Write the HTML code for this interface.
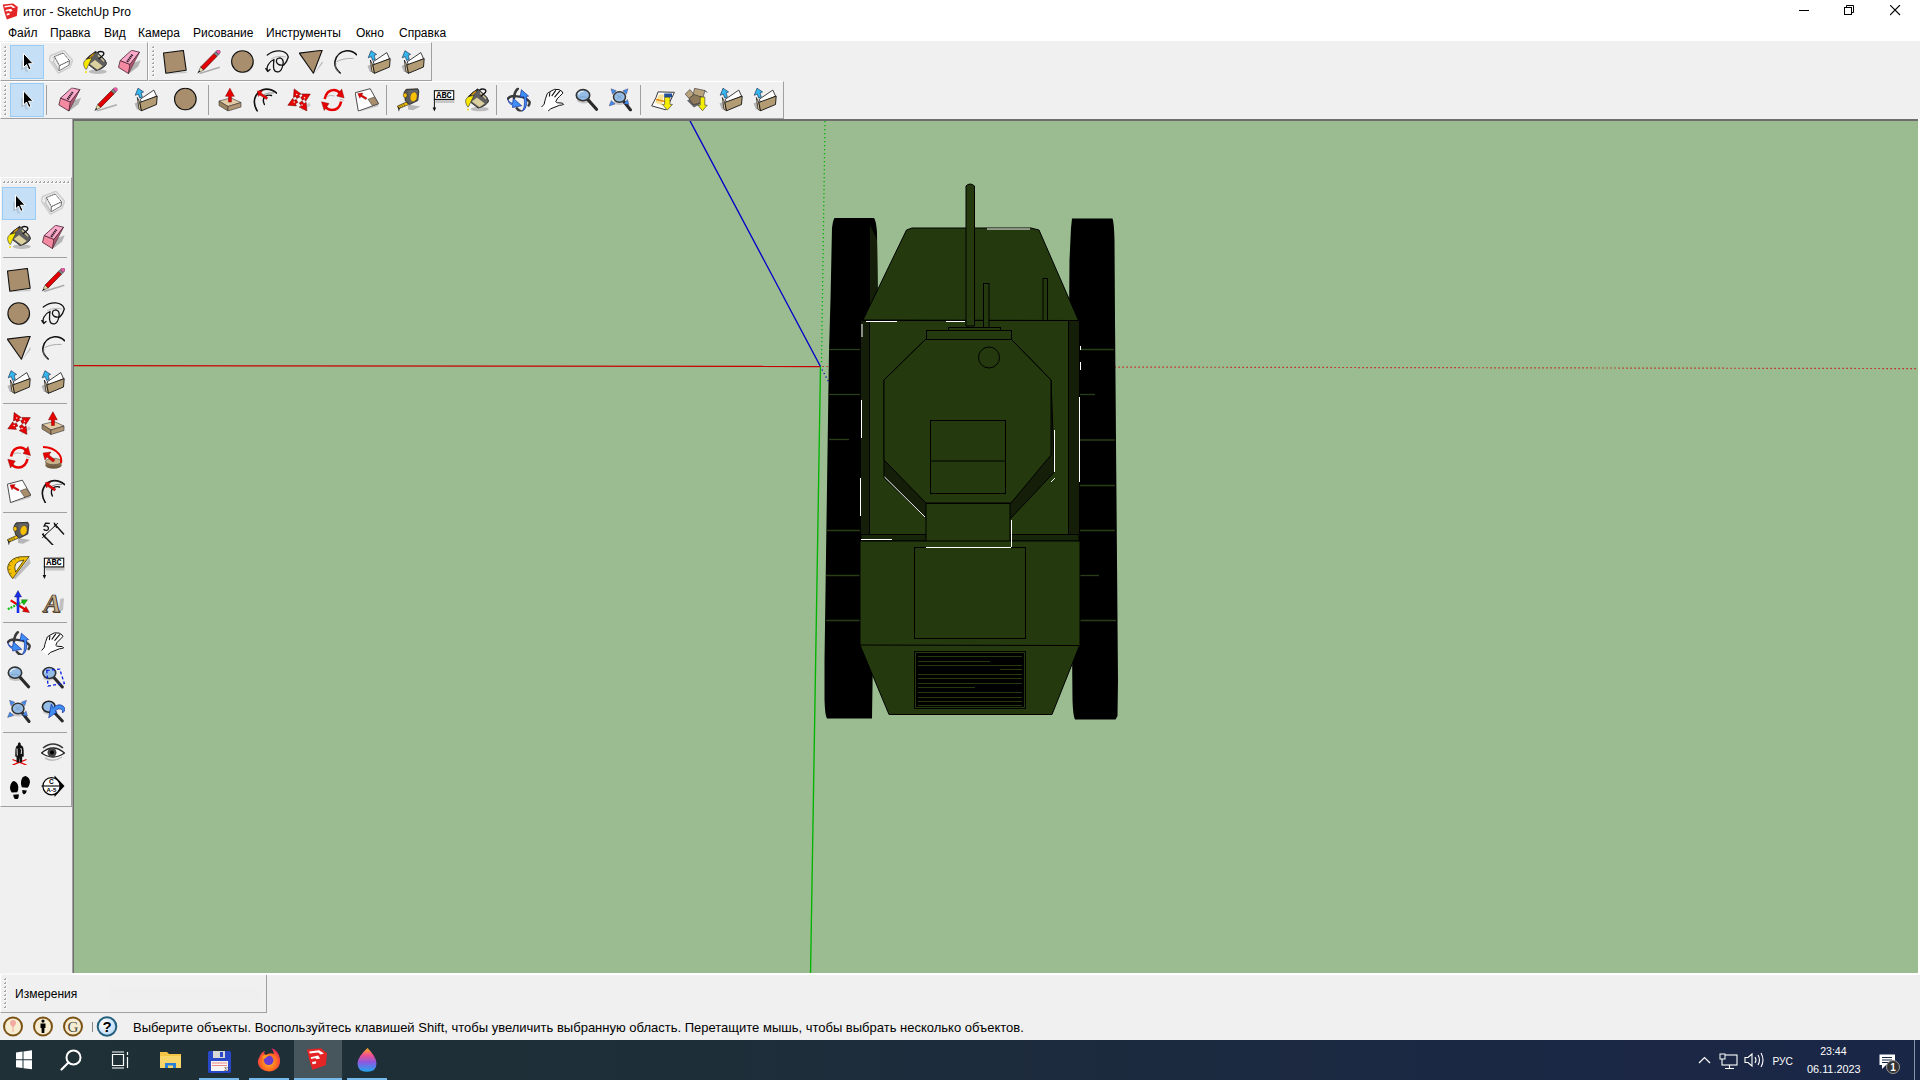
<!DOCTYPE html>
<html><head><meta charset="utf-8">
<style>
*{margin:0;padding:0;box-sizing:border-box}
html,body{width:1920px;height:1080px;overflow:hidden;background:#f0f0f0;font-family:"Liberation Sans",sans-serif;color:#000}
.abs{position:absolute}
.mi{position:absolute;top:25px;font-size:12px;line-height:16px;white-space:nowrap}
.btnsel{position:absolute;background:#c4dff6;border:1px solid #98cbf5}
</style></head>
<body>
<div class="abs" style="left:0;top:0;width:1920px;height:41px;background:#fff"></div>

<svg class="abs" style="left:1.5px;top:2.5px" width="16.5" height="17"><use href="#sulogo" x="0" y="0" width="16.5" height="17"/></svg>
<div class="abs" style="left:1799px;top:10px;width:10px;height:1px;background:#000"></div>
<svg class="abs" style="left:1844px;top:5px" width="12" height="12"><rect x="0.5" y="2.5" width="7" height="7" fill="none" stroke="#000"/><path d="M2.5,2.5 L2.5,0.5 L9.5,0.5 L9.5,7.5 L7.5,7.5" fill="none" stroke="#000"/></svg>
<svg class="abs" style="left:1890px;top:5px" width="11" height="11"><path d="M0,0 L10,10 M10,0 L0,10" stroke="#000" stroke-width="1.1"/></svg>

<div class="abs" style="left:23px;top:4px;font-size:12px;line-height:16px">итог - SketchUp Pro</div>
<div class="mi" style="left:8px">Файл</div>
<div class="mi" style="left:50px">Правка</div>
<div class="mi" style="left:104px">Вид</div>
<div class="mi" style="left:138px">Камера</div>
<div class="mi" style="left:193px">Рисование</div>
<div class="mi" style="left:266px">Инструменты</div>
<div class="mi" style="left:356px">Окно</div>
<div class="mi" style="left:399px">Справка</div>
<div class="abs" style="left:0px;top:42px;width:148px;height:39px;border-top:1px solid #fff;border-left:1px solid #fff;border-right:1px solid #a0a0a0;border-bottom:1px solid #a0a0a0"></div><div class="abs" style="left:148px;top:42px;width:284px;height:39px;border-top:1px solid #fff;border-left:1px solid #fff;border-right:1px solid #a0a0a0;border-bottom:1px solid #a0a0a0"></div><div class="abs" style="left:0px;top:81px;width:784px;height:38px;border-top:1px solid #fff;border-left:1px solid #fff;border-right:1px solid #a0a0a0;border-bottom:1px solid #a0a0a0"></div><div class="abs" style="left:0px;top:177px;width:72px;height:630px;border-top:1px solid #fff;border-left:1px solid #fff;border-right:1px solid #a0a0a0;border-bottom:1px solid #a0a0a0"></div><div class="abs" style="left:4px;top:46px;width:2px;height:2px;background:linear-gradient(135deg,#f0f0f0 0 30%,#a4a4a4 30% 100%);border-right:1px solid #fafafa;border-bottom:1px solid #fafafa;box-sizing:content-box"></div><div class="abs" style="left:4px;top:50px;width:2px;height:2px;background:linear-gradient(135deg,#f0f0f0 0 30%,#a4a4a4 30% 100%);border-right:1px solid #fafafa;border-bottom:1px solid #fafafa;box-sizing:content-box"></div><div class="abs" style="left:4px;top:54px;width:2px;height:2px;background:linear-gradient(135deg,#f0f0f0 0 30%,#a4a4a4 30% 100%);border-right:1px solid #fafafa;border-bottom:1px solid #fafafa;box-sizing:content-box"></div><div class="abs" style="left:4px;top:58px;width:2px;height:2px;background:linear-gradient(135deg,#f0f0f0 0 30%,#a4a4a4 30% 100%);border-right:1px solid #fafafa;border-bottom:1px solid #fafafa;box-sizing:content-box"></div><div class="abs" style="left:4px;top:62px;width:2px;height:2px;background:linear-gradient(135deg,#f0f0f0 0 30%,#a4a4a4 30% 100%);border-right:1px solid #fafafa;border-bottom:1px solid #fafafa;box-sizing:content-box"></div><div class="abs" style="left:4px;top:66px;width:2px;height:2px;background:linear-gradient(135deg,#f0f0f0 0 30%,#a4a4a4 30% 100%);border-right:1px solid #fafafa;border-bottom:1px solid #fafafa;box-sizing:content-box"></div><div class="abs" style="left:4px;top:70px;width:2px;height:2px;background:linear-gradient(135deg,#f0f0f0 0 30%,#a4a4a4 30% 100%);border-right:1px solid #fafafa;border-bottom:1px solid #fafafa;box-sizing:content-box"></div><div class="abs" style="left:4px;top:74px;width:2px;height:2px;background:linear-gradient(135deg,#f0f0f0 0 30%,#a4a4a4 30% 100%);border-right:1px solid #fafafa;border-bottom:1px solid #fafafa;box-sizing:content-box"></div><div class="abs" style="left:152px;top:46px;width:2px;height:2px;background:linear-gradient(135deg,#f0f0f0 0 30%,#a4a4a4 30% 100%);border-right:1px solid #fafafa;border-bottom:1px solid #fafafa;box-sizing:content-box"></div><div class="abs" style="left:152px;top:50px;width:2px;height:2px;background:linear-gradient(135deg,#f0f0f0 0 30%,#a4a4a4 30% 100%);border-right:1px solid #fafafa;border-bottom:1px solid #fafafa;box-sizing:content-box"></div><div class="abs" style="left:152px;top:54px;width:2px;height:2px;background:linear-gradient(135deg,#f0f0f0 0 30%,#a4a4a4 30% 100%);border-right:1px solid #fafafa;border-bottom:1px solid #fafafa;box-sizing:content-box"></div><div class="abs" style="left:152px;top:58px;width:2px;height:2px;background:linear-gradient(135deg,#f0f0f0 0 30%,#a4a4a4 30% 100%);border-right:1px solid #fafafa;border-bottom:1px solid #fafafa;box-sizing:content-box"></div><div class="abs" style="left:152px;top:62px;width:2px;height:2px;background:linear-gradient(135deg,#f0f0f0 0 30%,#a4a4a4 30% 100%);border-right:1px solid #fafafa;border-bottom:1px solid #fafafa;box-sizing:content-box"></div><div class="abs" style="left:152px;top:66px;width:2px;height:2px;background:linear-gradient(135deg,#f0f0f0 0 30%,#a4a4a4 30% 100%);border-right:1px solid #fafafa;border-bottom:1px solid #fafafa;box-sizing:content-box"></div><div class="abs" style="left:152px;top:70px;width:2px;height:2px;background:linear-gradient(135deg,#f0f0f0 0 30%,#a4a4a4 30% 100%);border-right:1px solid #fafafa;border-bottom:1px solid #fafafa;box-sizing:content-box"></div><div class="abs" style="left:152px;top:74px;width:2px;height:2px;background:linear-gradient(135deg,#f0f0f0 0 30%,#a4a4a4 30% 100%);border-right:1px solid #fafafa;border-bottom:1px solid #fafafa;box-sizing:content-box"></div><div class="abs" style="left:4px;top:85px;width:2px;height:2px;background:linear-gradient(135deg,#f0f0f0 0 30%,#a4a4a4 30% 100%);border-right:1px solid #fafafa;border-bottom:1px solid #fafafa;box-sizing:content-box"></div><div class="abs" style="left:4px;top:89px;width:2px;height:2px;background:linear-gradient(135deg,#f0f0f0 0 30%,#a4a4a4 30% 100%);border-right:1px solid #fafafa;border-bottom:1px solid #fafafa;box-sizing:content-box"></div><div class="abs" style="left:4px;top:93px;width:2px;height:2px;background:linear-gradient(135deg,#f0f0f0 0 30%,#a4a4a4 30% 100%);border-right:1px solid #fafafa;border-bottom:1px solid #fafafa;box-sizing:content-box"></div><div class="abs" style="left:4px;top:97px;width:2px;height:2px;background:linear-gradient(135deg,#f0f0f0 0 30%,#a4a4a4 30% 100%);border-right:1px solid #fafafa;border-bottom:1px solid #fafafa;box-sizing:content-box"></div><div class="abs" style="left:4px;top:101px;width:2px;height:2px;background:linear-gradient(135deg,#f0f0f0 0 30%,#a4a4a4 30% 100%);border-right:1px solid #fafafa;border-bottom:1px solid #fafafa;box-sizing:content-box"></div><div class="abs" style="left:4px;top:105px;width:2px;height:2px;background:linear-gradient(135deg,#f0f0f0 0 30%,#a4a4a4 30% 100%);border-right:1px solid #fafafa;border-bottom:1px solid #fafafa;box-sizing:content-box"></div><div class="abs" style="left:4px;top:109px;width:2px;height:2px;background:linear-gradient(135deg,#f0f0f0 0 30%,#a4a4a4 30% 100%);border-right:1px solid #fafafa;border-bottom:1px solid #fafafa;box-sizing:content-box"></div><div class="abs" style="left:4px;top:113px;width:2px;height:2px;background:linear-gradient(135deg,#f0f0f0 0 30%,#a4a4a4 30% 100%);border-right:1px solid #fafafa;border-bottom:1px solid #fafafa;box-sizing:content-box"></div><div class="abs" style="left:3px;top:181px;width:2px;height:2px;background:linear-gradient(135deg,#f0f0f0 0 30%,#a4a4a4 30% 100%);border-right:1px solid #fafafa;border-bottom:1px solid #fafafa;box-sizing:content-box"></div><div class="abs" style="left:7px;top:181px;width:2px;height:2px;background:linear-gradient(135deg,#f0f0f0 0 30%,#a4a4a4 30% 100%);border-right:1px solid #fafafa;border-bottom:1px solid #fafafa;box-sizing:content-box"></div><div class="abs" style="left:11px;top:181px;width:2px;height:2px;background:linear-gradient(135deg,#f0f0f0 0 30%,#a4a4a4 30% 100%);border-right:1px solid #fafafa;border-bottom:1px solid #fafafa;box-sizing:content-box"></div><div class="abs" style="left:15px;top:181px;width:2px;height:2px;background:linear-gradient(135deg,#f0f0f0 0 30%,#a4a4a4 30% 100%);border-right:1px solid #fafafa;border-bottom:1px solid #fafafa;box-sizing:content-box"></div><div class="abs" style="left:19px;top:181px;width:2px;height:2px;background:linear-gradient(135deg,#f0f0f0 0 30%,#a4a4a4 30% 100%);border-right:1px solid #fafafa;border-bottom:1px solid #fafafa;box-sizing:content-box"></div><div class="abs" style="left:23px;top:181px;width:2px;height:2px;background:linear-gradient(135deg,#f0f0f0 0 30%,#a4a4a4 30% 100%);border-right:1px solid #fafafa;border-bottom:1px solid #fafafa;box-sizing:content-box"></div><div class="abs" style="left:27px;top:181px;width:2px;height:2px;background:linear-gradient(135deg,#f0f0f0 0 30%,#a4a4a4 30% 100%);border-right:1px solid #fafafa;border-bottom:1px solid #fafafa;box-sizing:content-box"></div><div class="abs" style="left:31px;top:181px;width:2px;height:2px;background:linear-gradient(135deg,#f0f0f0 0 30%,#a4a4a4 30% 100%);border-right:1px solid #fafafa;border-bottom:1px solid #fafafa;box-sizing:content-box"></div><div class="abs" style="left:35px;top:181px;width:2px;height:2px;background:linear-gradient(135deg,#f0f0f0 0 30%,#a4a4a4 30% 100%);border-right:1px solid #fafafa;border-bottom:1px solid #fafafa;box-sizing:content-box"></div><div class="abs" style="left:39px;top:181px;width:2px;height:2px;background:linear-gradient(135deg,#f0f0f0 0 30%,#a4a4a4 30% 100%);border-right:1px solid #fafafa;border-bottom:1px solid #fafafa;box-sizing:content-box"></div><div class="abs" style="left:43px;top:181px;width:2px;height:2px;background:linear-gradient(135deg,#f0f0f0 0 30%,#a4a4a4 30% 100%);border-right:1px solid #fafafa;border-bottom:1px solid #fafafa;box-sizing:content-box"></div><div class="abs" style="left:47px;top:181px;width:2px;height:2px;background:linear-gradient(135deg,#f0f0f0 0 30%,#a4a4a4 30% 100%);border-right:1px solid #fafafa;border-bottom:1px solid #fafafa;box-sizing:content-box"></div><div class="abs" style="left:51px;top:181px;width:2px;height:2px;background:linear-gradient(135deg,#f0f0f0 0 30%,#a4a4a4 30% 100%);border-right:1px solid #fafafa;border-bottom:1px solid #fafafa;box-sizing:content-box"></div><div class="abs" style="left:55px;top:181px;width:2px;height:2px;background:linear-gradient(135deg,#f0f0f0 0 30%,#a4a4a4 30% 100%);border-right:1px solid #fafafa;border-bottom:1px solid #fafafa;box-sizing:content-box"></div><div class="abs" style="left:59px;top:181px;width:2px;height:2px;background:linear-gradient(135deg,#f0f0f0 0 30%,#a4a4a4 30% 100%);border-right:1px solid #fafafa;border-bottom:1px solid #fafafa;box-sizing:content-box"></div><div class="abs" style="left:63px;top:181px;width:2px;height:2px;background:linear-gradient(135deg,#f0f0f0 0 30%,#a4a4a4 30% 100%);border-right:1px solid #fafafa;border-bottom:1px solid #fafafa;box-sizing:content-box"></div><div class="abs" style="left:67px;top:181px;width:2px;height:2px;background:linear-gradient(135deg,#f0f0f0 0 30%,#a4a4a4 30% 100%);border-right:1px solid #fafafa;border-bottom:1px solid #fafafa;box-sizing:content-box"></div><div class="btnsel" style="left:10px;top:45px;width:34px;height:34px"></div><div class="btnsel" style="left:10px;top:83px;width:34px;height:34px"></div><div class="btnsel" style="left:2px;top:187px;width:34px;height:33px"></div><div class="abs" style="left:46px;top:85px;width:1px;height:30px;background:#a0a0a0"></div><div class="abs" style="left:208px;top:85px;width:1px;height:30px;background:#a0a0a0"></div><div class="abs" style="left:386px;top:85px;width:1px;height:30px;background:#a0a0a0"></div><div class="abs" style="left:496px;top:85px;width:1px;height:30px;background:#a0a0a0"></div><div class="abs" style="left:640px;top:85px;width:1px;height:30px;background:#a0a0a0"></div><div class="abs" style="left:3px;top:257px;width:64px;height:1px;background:#a0a0a0"></div><div class="abs" style="left:3px;top:403px;width:64px;height:1px;background:#a0a0a0"></div><div class="abs" style="left:3px;top:512px;width:64px;height:1px;background:#a0a0a0"></div><div class="abs" style="left:3px;top:622px;width:64px;height:1px;background:#a0a0a0"></div><div class="abs" style="left:3px;top:732px;width:64px;height:1px;background:#a0a0a0"></div>
<div class="abs" style="left:72px;top:119px;width:1846px;height:854px;background:#6d6d6d"></div>
<div class="abs" style="left:72px;top:119px;width:1px;height:854px;background:#a0a0a0"></div>
<div class="abs" style="left:74px;top:121px;width:1844px;height:852px;background:#9bbc90"></div>
<div class="abs" style="left:0;top:973px;width:72px;height:2px;background:#f8f8f8"></div><div class="abs" style="left:72px;top:973px;width:1848px;height:2px;background:#fff"></div>
<div class="abs" style="left:1918px;top:119px;width:2px;height:856px;background:#fff"></div>
<svg class="abs" style="left:0;top:0" width="1920" height="1080" viewBox="0 0 1920 1080">
<defs><clipPath id="cv"><rect x="74" y="121" width="1844" height="852"/></clipPath></defs>
<g clip-path="url(#cv)">
<!-- axes -->
<line x1="74" y1="365.6" x2="820.5" y2="366.5" stroke="#c80000" stroke-width="1.35"/>
<line x1="688.5" y1="118" x2="820.5" y2="366.5" stroke="#0000c8" stroke-width="1.35"/>
<line x1="820.5" y1="366.5" x2="810.5" y2="975" stroke="#00b400" stroke-width="1.35"/>
<line x1="825" y1="121" x2="821.5" y2="364" stroke="#00b400" stroke-width="1.3" stroke-dasharray="1.3 2.7"/>
<line x1="822.5" y1="366.5" x2="1920" y2="368.6" stroke="#c80000" stroke-width="1.2" stroke-dasharray="1.2 2.8"/>
<line x1="822" y1="369.5" x2="832" y2="388" stroke="#0000c8" stroke-width="1.2" stroke-dasharray="1.2 2.8"/>
<!-- left track -->
<path d="M834.5,218 L874,218 Q876,220 877,232 L878,320 L872,718.5 L827,718.5 Q825,716 824.5,700 L824.5,660 L829,350 L830.5,300 L832,228 Q833,220 834.5,218 Z" fill="#000"/>
<path d="M870,225 L877,240 L878,320 L870,330 Z" fill="#141e08"/>
<!-- right track -->
<path d="M1072,218.5 L1112.5,218.5 Q1114,222 1114.5,240 L1115,320 L1118,680 L1117.5,716 L1115.5,719.5 L1075,719.5 Q1073,716 1072.5,700 L1069,320 L1069.5,260 L1071,228 Z" fill="#000"/>
<!-- track lines -->
<g stroke="#2a3e16" stroke-width="1.3">
<line x1="829" y1="349.5" x2="860" y2="349.5"/><line x1="828" y1="394.5" x2="860" y2="394.5"/>
<line x1="829" y1="439.5" x2="849" y2="439.5"/>
<line x1="827" y1="530.5" x2="860" y2="530.5"/><line x1="826" y1="575.5" x2="860" y2="575.5"/>
<line x1="826" y1="620.5" x2="860" y2="620.5"/>
<line x1="1080" y1="349.5" x2="1114" y2="349.5"/><line x1="1080" y1="394.5" x2="1095" y2="394.5"/>
<line x1="1080" y1="440" x2="1115" y2="440"/><line x1="1080" y1="485.5" x2="1115" y2="485.5"/>
<line x1="1080" y1="530.5" x2="1115" y2="530.5"/><line x1="1080" y1="575.5" x2="1099" y2="575.5"/>
<line x1="1080" y1="620.5" x2="1116" y2="620.5"/>
</g>
<!-- front plate -->
<path d="M912,228 L1031,228 L1039,230 L1078.5,320.5 L863,320 L906.5,230 Z" fill="#243a0e" stroke="#000" stroke-width="1"/>
<!-- main hull -->
<rect x="860.5" y="320.5" width="219" height="220" fill="#243a0e" stroke="#000" stroke-width="1"/>
<rect x="861" y="321" width="8" height="219" fill="#141e08"/>
<rect x="1069" y="321" width="10" height="219" fill="#141e08"/>
<line x1="869.5" y1="321" x2="869.5" y2="535" stroke="#000"/>
<line x1="1068.5" y1="321" x2="1068.5" y2="535" stroke="#000"/>
<rect x="861" y="534.5" width="218" height="6.5" fill="#172508" stroke="#000"/>

<!-- octagon top plate with bevels -->
<path d="M926,339 L1011,339 L1051,380 L1054.5,472 L1011,518 L926,518 L884,478 L884,380 Z" fill="#141e08" stroke="#000"/>
<path d="M926,339 L1011,339 L1051,380 L1051,455 L1011,503 L926,503 L884,460 L884,380 Z" fill="#243a0e" stroke="#000"/>
<rect x="926.5" y="330.5" width="85" height="9" fill="#243a0e" stroke="#000"/>
<rect x="948.5" y="327.5" width="52" height="3" fill="#243a0e" stroke="#000"/>
<circle cx="989" cy="357.5" r="10.5" fill="none" stroke="#000"/>
<rect x="930.5" y="420.5" width="75" height="73" fill="none" stroke="#000"/>
<line x1="930.5" y1="461" x2="1005.5" y2="461" stroke="#000"/>
<rect x="926" y="503.5" width="84" height="44" fill="#243a0e" stroke="#000"/>
<!-- lower hull -->
<rect x="860" y="541" width="220" height="104.5" fill="#243a0e" stroke="#000"/>
<rect x="914.5" y="547.5" width="111" height="91" fill="none" stroke="#000"/>
<!-- rear plate -->
<path d="M860,645 L1079.5,645.5 L1052,714.5 L889,714.5 Z" fill="#243a0e" stroke="#000"/>
<rect x="914.5" y="651.5" width="111" height="57" fill="#243a0e" stroke="#000"/>
<rect x="916" y="653" width="108" height="54" fill="#000"/>
<g stroke="#243a0e" stroke-width="1">
<line x1="918" y1="656.5" x2="1022" y2="656.5"/><line x1="918" y1="661.5" x2="990" y2="661.5"/>
<line x1="918" y1="665.5" x2="1022" y2="665.5"/><line x1="1000" y1="669.5" x2="1022" y2="669.5"/>
<line x1="918" y1="674.5" x2="1022" y2="674.5"/><line x1="918" y1="678.5" x2="1022" y2="678.5"/>
<line x1="918" y1="683.5" x2="1022" y2="683.5"/><line x1="918" y1="687.5" x2="975" y2="687.5"/>
<line x1="918" y1="692.5" x2="1022" y2="692.5"/><line x1="918" y1="697.5" x2="1022" y2="697.5"/>
<line x1="918" y1="701.5" x2="1022" y2="701.5"/><line x1="918" y1="705.5" x2="1022" y2="705.5"/>
</g>
<line x1="1025.5" y1="651" x2="1025.5" y2="709" stroke="#000"/>
<!-- gun & antennas -->
<path d="M966,186 Q970,182 974.5,186 L974.5,326 L966,326 Z" fill="#243a0e" stroke="#000"/>
<rect x="983.5" y="283.5" width="5.5" height="44" fill="#243a0e" stroke="#000"/>
<rect x="1043" y="278.5" width="4.5" height="42" fill="#243a0e" stroke="#000"/>
<!-- white edges -->
<g stroke="#fff" stroke-width="1">
<line x1="866" y1="321.5" x2="897" y2="321.5"/><line x1="946" y1="321.5" x2="965" y2="321.5"/>
<line x1="862" y1="324" x2="862" y2="337"/><line x1="861.5" y1="400" x2="861.5" y2="438"/>
<line x1="860.5" y1="478" x2="860.5" y2="516"/>
<line x1="861" y1="539.5" x2="892" y2="539.5"/>
<line x1="1080.5" y1="346" x2="1080.5" y2="350"/><line x1="1080.5" y1="362" x2="1080.5" y2="370"/>
<line x1="1079.5" y1="397" x2="1079.5" y2="482"/>
<line x1="926" y1="547.5" x2="1011" y2="547.5"/>
<line x1="1011.5" y1="520" x2="1011.5" y2="547"/>
<line x1="1054.5" y1="430" x2="1054.5" y2="472"/><line x1="1051" y1="482" x2="1055" y2="478"/>
<line x1="884.5" y1="477" x2="925" y2="517"/>
<line x1="987" y1="229" x2="1030" y2="229"/>
</g>
</g>
</svg>

<svg width="0" height="0" style="position:absolute">
<defs>
<symbol id="sel" viewBox="0 0 24 24">
<path d="M6,10 L6,21 L9,19 L11,23 L13,22 L11,18.5 L14,18.5 Z" fill="#9a9a9a" opacity=".35"/>
<path d="M8.5,3.8 L8.5,18 L11.5,15 L13.8,20.4 L16,19.4 L13.6,14.2 L18.2,14.2 Z" fill="#000" stroke="#fff" stroke-width="1" stroke-linejoin="round"/>
</symbol>
<symbol id="comp" viewBox="0 0 24 24">
<path d="M1.3,5.8 L14.8,0.3 L23.6,10.2 L21,17.2 L9.4,23.1 L0.6,10.4 Z" fill="none" stroke="#cdcdcd" stroke-width="1.5" stroke-linejoin="round"/>
<path d="M3,8 L14,2.5 M21.5,10.5 L19.5,16 M2.5,11 L9,20.5" fill="none" stroke="#c4c4c4" stroke-width=".9"/>
<path d="M5.5,6.5 L10.4,15.6 L10.1,20.8 L4.6,12 Z" fill="#ececec" stroke="#a8a8a8" stroke-width=".8"/>
<path d="M10.4,15.6 L20.5,10.7 L20,15.1 L10.1,20.8 Z" fill="#fff" stroke="#6a6a6a" stroke-width=".9"/>
<path d="M5.5,6.5 L14.3,3.05 L20.5,10.7 L10.4,15.6 Z" fill="#fff" stroke="#555" stroke-width=".95" stroke-dasharray="1.4 .5"/>
</symbol>
<symbol id="paint" viewBox="0 0 24 24">
<ellipse cx="14.8" cy="21.6" rx="9" ry="2.3" fill="#a0a0a0" opacity=".65"/>
<path d="M3.4,8.9 L12.5,1.4 L15,3.2 L21.8,9.7 L23.6,13.5 Q22,18 13.2,20.5 L5.7,14.8 Z" fill="#5e5e5e" stroke="#222" stroke-width=".9" stroke-linejoin="round"/>
<path d="M15.3,4.6 L21.5,10.8 L20.8,12 L14.6,5.8 Z" fill="#cfc395"/>
<path d="M6.8,14 L12,9.9 L19.7,16.1 L14.5,19.8 Z" fill="#dbd09e"/>
<path d="M3.2,9 Q7,4 12.5,1.4 L13.5,2.6 Q8,6.5 5,10.5 Z" fill="#262626"/>
<path d="M6,7.5 Q9,4 12,2.7 Q10.5,5.5 7,8 Z" fill="#e8a000"/>
<path d="M2.9,9.4 Q0,12 0.6,14.5 Q1.2,17.5 2.9,19.5 L4,18.5 Q4.6,16.5 5.6,14.8 Q7.5,11 9,7.8 Q6,8.5 2.9,9.4 Z" fill="#f8e800" stroke="#333" stroke-width=".6"/>
<circle cx="3" cy="22" r="1" fill="#f0e000"/>
<path d="M14.5,2.6 Q17,0.8 19.7,1.9 Q21.5,3 20.5,4.8 L15.8,9" fill="none" stroke="#111" stroke-width="1.3"/>
</symbol>
<symbol id="eraser" viewBox="0 0 24 24">
<path d="M14,14 L23.7,10.2 L21,16.8 L12.7,23 Z" fill="#9a9a9a" opacity=".7"/>
<path d="M1.5,17.4 L3.2,10.5 L13,14.4 L11.5,23.6 Z" fill="#f48aa2" stroke="#4a2030" stroke-width=".8" stroke-linejoin="round"/>
<path d="M3.2,10.5 L14.5,0.3 L22.5,2.2 L13,14.4 Z" fill="#f9a9c9" stroke="#4a2030" stroke-width=".8" stroke-linejoin="round"/>
<path d="M13,14.4 L22.5,2.2 L11.5,23.6 Z" fill="#b05a72" stroke="#4a2030" stroke-width=".6" stroke-linejoin="round"/>
<path d="M10.2,11.8 L15.6,4.2" stroke="#2a1a20" stroke-width="2.2" stroke-dasharray="1.3 .6"/>
</symbol>
<symbol id="rect" viewBox="0 0 24 24">
<path d="M4,23.4 L23.5,21.5 L23.5,23 L4,24 Z" fill="#aaa" opacity=".6"/>
<path d="M0.5,3 L20.4,0.5 L23.2,20.3 L2.8,23.2 Z" fill="#a88e6c" stroke="#111" stroke-width="1.1" stroke-linejoin="round"/>
</symbol>
<symbol id="pencil" viewBox="0 0 24 24">
<path d="M3,23.5 L23.3,17.2" stroke="#8f8f8f" stroke-width="1.6" opacity=".7"/>
<g transform="translate(0.8,23.4) rotate(-45.5)">
<path d="M0,0 L3.5,-1 L3.5,1 Z" fill="#111"/>
<path d="M3.5,-1 L7,-2.1 L7,2.1 L3.5,1 Z" fill="#eadca0" stroke="#333" stroke-width=".5"/>
<rect x="7" y="-2.1" width="19" height="4.2" fill="#e40000" stroke="#400" stroke-width=".6"/>
<rect x="26" y="-2.1" width="2.5" height="4.2" fill="#888" stroke="#333" stroke-width=".5"/>
<rect x="28.5" y="-2.1" width="3.5" height="4.2" rx="1" fill="#f25aa8" stroke="#333" stroke-width=".5"/>
</g>
</symbol>
<symbol id="circle" viewBox="0 0 24 24">
<circle cx="12.5" cy="12.3" r="10.8" fill="#9c9c9c" opacity=".5"/>
<circle cx="11.7" cy="11.5" r="10.8" fill="#a88e6c" stroke="#111" stroke-width="1.1"/>
</symbol>
<symbol id="freehand" viewBox="0 0 24 24">
<path d="M2.3,5 Q8,0.5 14.7,0.9 Q22,1.5 23.3,7 Q22,12 18.8,15 Q13,16 11.5,12 Q11,8 15,7.8 Q19,9 18,14 Q17,21 13.5,21.8 Q9,22.5 8.5,17 Q8.5,12 9,9.5 Q5,11 3,15 Q1.5,18 2.5,20.5 M0.8,18.6 L2.7,21.5 L5,19.5" fill="none" stroke="#111" stroke-width="1.3" stroke-linejoin="round" stroke-linecap="round"/>
<path d="M6,9 Q12,5 21,7" fill="none" stroke="#999" stroke-width=".6"/>
</symbol>
<symbol id="poly" viewBox="0 0 24 24">
<path d="M23.4,11 L15.3,23.8 L23.5,13.5 Z" fill="#999" opacity=".6"/>
<path d="M0.3,3.1 L23.2,0.3 L14.4,23.3 Z" fill="#a88e6c" stroke="#111" stroke-width="1.1" stroke-linejoin="round"/>
</symbol>
<symbol id="arc" viewBox="0 0 24 24">
<path d="M7.2,23 Q1,18 2,11.5 Q4,2 13.5,0.8 Q19.5,0.6 23.5,4.6" fill="none" stroke="#111" stroke-width="1.6" stroke-linecap="round"/>
<path d="M3.5,11.8 Q10,8 20.5,8.4" fill="none" stroke="#9a9a9a" stroke-width=".8"/>
<path d="M3,13 Q1.5,20 6,22" fill="none" stroke="#888" stroke-width=".7"/>
</symbol>
<symbol id="folder" viewBox="0 0 24 24">
<path d="M0.5,16 L5,14 L7.5,21.5 L3,22 Z" fill="#9a9a9a" opacity=".7"/>
<path d="M3.3,10 L5.8,14.9 L7.5,23.3 L5,21.9 Z" fill="#e2c99a" stroke="#111" stroke-width=".7"/>
<path d="M6.2,11.8 L19.8,2.6 L22.6,8.7 L7.7,15.3 Z" fill="#fff" stroke="#111" stroke-width=".8"/>
<path d="M5.8,14.9 L23.2,8.6 L22.5,17 L7.5,23.3 Z" fill="#b39b74" stroke="#111" stroke-width=".9" stroke-linejoin="round"/>
<path d="M1.2,7.8 L4,0.7 L9.6,4.4 L7.1,5.4 L8.3,9.4 L5.6,10.4 L4.3,6.6 Z" fill="#35b8f0" stroke="#124" stroke-width=".6" stroke-linejoin="round"/>
</symbol>
<symbol id="pushpull" viewBox="0 0 24 24">
<path d="M1,13.5 L13,10.5 L23,15 L10,19 Z" fill="#e3cca5" stroke="#333" stroke-width=".6"/>
<path d="M1,13.5 L10,19 L10,23.5 L1,18 Z" fill="#9c835f" stroke="#333" stroke-width=".6"/>
<path d="M10,19 L23,15 L23,19.5 L10,23.5 Z" fill="#b29673" stroke="#333" stroke-width=".6"/>
<path d="M11.9,0.7 L16.3,8.8 L13.4,8.8 L13.4,14.5 L10.5,14.5 L10.5,8.8 L7.5,8.8 Z" fill="#e80000" stroke="#700" stroke-width=".5"/>
</symbol>
<symbol id="followme" viewBox="0 0 24 24">
<path d="M4.4,23.8 Q-1,15 3,8 Q7,1.6 13.2,1.6 Q19,1.5 23.8,5.6" fill="none" stroke="#111" stroke-width="1.6" stroke-linecap="round"/>
<path d="M11.4,17 Q9,12 12,9 Q15,7 18.5,8" fill="none" stroke="#111" stroke-width="1.4" stroke-linecap="round"/>
<path d="M11,7 Q16,4.5 21,5.5" fill="none" stroke="#777" stroke-width=".8"/>
<path d="M4.4,3.4 L9.5,3.2 L8,5.5 L14.8,10 L13.5,12 L6.8,7.5 L5.5,9 Z" fill="#e80000" stroke="#700" stroke-width=".4"/>
</symbol>
<symbol id="move" viewBox="0 0 24 24">
<path d="M13,24 L24,18 L22,15 Z" fill="#999" opacity=".4"/>
<g fill="#e80000" stroke="#6a0000" stroke-width=".5" stroke-linejoin="round"><path d="M12.8,9.4 L11.8,7.5 L14.1,6.4 L7.1,1.4 L6.5,10.0 L8.8,8.9 L9.7,10.9 Z"/><path d="M15.3,12.7 L17.5,11.6 L18.6,13.8 L23.3,6.6 L14.7,6.4 L15.9,8.6 L13.7,9.7 Z"/><path d="M9.3,11.9 L6.9,13.1 L5.8,10.8 L0.8,17.8 L9.4,18.4 L8.3,16.2 L10.8,15.0 Z"/><path d="M12.3,15.4 L14.2,18.2 L12.2,19.6 L19.9,23.4 L19.1,14.8 L17.0,16.3 L15.1,13.5 Z"/></g>
<g fill="#fff" opacity=".9"><circle cx="12.3" cy="12.4" r="1.3"/><circle cx="9.7" cy="7" r=".8"/><circle cx="17.5" cy="10.3" r=".8"/><circle cx="7.2" cy="14.5" r=".8"/><circle cx="15" cy="17.6" r=".8"/></g>
</symbol>
<symbol id="rotate" viewBox="0 0 24 24">
<path d="M4,11.5 Q6,2.5 13,2.5 Q17,2.5 19.5,6" fill="none" stroke="#e80000" stroke-width="2.6"/>
<path d="M16,8.5 L21,1.5 L23.5,10.5 Z" fill="#e80000" stroke="#700" stroke-width=".4"/>
<path d="M20.5,14 Q18.5,22.5 11.5,22.5 Q7,22.5 4.5,19" fill="none" stroke="#e80000" stroke-width="2.6"/>
<path d="M8.3,16 L3.5,23 L0.8,14.3 Z" fill="#e80000" stroke="#700" stroke-width=".4"/>
<path d="M6,9 Q10,7 14,8.5" fill="none" stroke="#888" stroke-width=".8" opacity=".7"/>
<path d="M19,12 Q22,12 23,13" fill="none" stroke="#888" stroke-width=".8" opacity=".7"/>
</symbol>
<symbol id="scale" viewBox="0 0 24 24">
<path d="M4.5,24 L23.5,17 L23.5,18.5 L5,24 Z" fill="#999" opacity=".6"/>
<path d="M0.4,5.2 L15.4,1.2 L23.8,16.2 L3.5,23.6 Z" fill="#fff" stroke="#222" stroke-width=".8" stroke-linejoin="round"/>
<path d="M13.2,11.8 L19.4,9.6 L23.8,16.2 L17.6,18.2 Z" fill="#a88e6c" stroke="#333" stroke-width=".5"/>
<path d="M3,6 L8.2,5.6 L7,7.4 L12.2,10.6 L11.2,12 L6,8.9 L5,10.8 Z" fill="#e80000" stroke="#700" stroke-width=".4"/>
</symbol>
<symbol id="tape" viewBox="0 0 24 24">
<path d="M11,17 L23.5,19 L16,22.8 L11,22 Z" fill="#9c9c9c" opacity=".7"/>
<path d="M0.4,18.6 L10,14.2 L11.4,17.2 L1.8,21.2 Z" fill="#f2c000" stroke="#222" stroke-width=".6"/>
<path d="M2.6,17.6 L3.6,20.4 M4.6,16.7 L5.6,19.5 M6.6,15.8 L7.6,18.6" stroke="#333" stroke-width=".6"/>
<path d="M0.5,18.6 L1.9,24.6 L2.8,20.8 Z" fill="#222"/>
<path d="M9.1,1.85 L20.8,1.3 L21.8,3.7 L20.8,13 L12.5,17.1 L8.4,13.5 L7.1,5 Z" fill="#585858" stroke="#1a1a1a" stroke-width=".8" stroke-linejoin="round"/>
<path d="M11.5,3 L20.5,2.5 L19.8,12.2 L12.8,15.5 Z" fill="#666"/>
<ellipse cx="16.6" cy="9.4" rx="3.5" ry="5" transform="rotate(12 16.6 9.4)" fill="#f6c000" stroke="#3a3a50" stroke-width=".5"/>
<ellipse cx="8.2" cy="7.8" rx="1.9" ry="2.4" fill="#f6c000" stroke="#222" stroke-width=".5"/>
</symbol>
<symbol id="text" viewBox="0 0 24 24">
<rect x="4.5" y="12" width="19" height="3.5" fill="#aaa" opacity=".6"/>
<rect x="3.4" y="3.2" width="19.3" height="8.7" fill="#fff" stroke="#111" stroke-width="1.1"/>
<text x="13" y="10.3" font-family="Liberation Mono" font-weight="bold" font-size="8.5" text-anchor="middle" fill="#000" textLength="15.5" lengthAdjust="spacingAndGlyphs">ABC</text>
<path d="M3.4,11.5 L3.4,21" stroke="#111" stroke-width="1"/>
<path d="M1.6,20 L5.2,20 L3.4,24 Z" fill="#111"/>
</symbol>
<symbol id="orbit" viewBox="0 0 24 24">
<path d="M10.8,1.3 Q7.5,4 7,10.5" fill="none" stroke="#3a3a3a" stroke-width="2.6" stroke-linecap="round"/>
<path d="M1,11 Q3,8.3 8,8.6 L14.5,9.4 Q19,10 22.5,14.2 Q23,16 21.6,18" fill="none" stroke="#3a3a3a" stroke-width="2.4" stroke-linecap="round"/>
<path d="M9.8,20.8 Q11.5,23 14.1,24" fill="none" stroke="#3a3a3a" stroke-width="2.6" stroke-linecap="round"/>
<path d="M0.8,11.3 Q1,14.5 5.5,16 L6.3,10.8 L14.7,18.3 L5.5,20 L5.6,17.8 Q1,16 0.8,11.3 Z" fill="#3d8ef5" stroke="#0a1a8a" stroke-width=".6" stroke-linejoin="round"/>
<path d="M14.4,2.2 L21.6,8.6 L19.3,9 Q20.2,14 19.5,17.5 Q18.5,22.5 15.2,23.8 Q17.8,20 17.5,15 Q17.4,11 16.8,9.3 L13,9.7 Z" fill="#3d8ef5" stroke="#0a1a8a" stroke-width=".6" stroke-linejoin="round"/>
</symbol>
<symbol id="pan" viewBox="0 0 24 24">
<path d="M0.6,19.5 L3.2,16.6 Q3.8,13 4.7,10.7 L6.3,6 L8.9,4.2 L13.5,1.85 L18.2,2.1 L21.3,4.2 L21.8,5.7 Q18,9.5 16.1,11.4 L14.8,14.3 Q15.5,15.3 16.7,15.3 L21.3,15.6 L22.6,16.9 Q21,17.8 18.7,17.7 L9.7,21.3 L7.1,23.6 L4,22.5 Z" fill="#fff"/>
<path d="M0.6,19.5 L3.2,16.6 Q3.8,13 4.7,10.7 L6.3,6 L8.9,4.2 L13.5,1.85 L18.2,2.1 L21.3,4.2 L21.8,5.7 Q18,9.5 16.1,11.4 L14.8,14.3 Q15.5,15.3 16.7,15.3 L21.3,15.6 L22.6,16.9 Q21,17.8 18.7,17.7 L9.7,21.3 L7.1,23.6" fill="none" stroke="#111" stroke-width="1" stroke-linejoin="round"/>
<path d="M8.4,8.6 L8.9,5 M11,8.1 L14.6,3.1 M13.8,9.4 L18.7,3.7" stroke="#111" stroke-width="1.1" stroke-linecap="round"/>
</symbol>
<symbol id="zoom" viewBox="0 0 24 24">
<ellipse cx="9" cy="13" rx="7" ry="3" fill="#9a9a9a" opacity=".5"/>
<path d="M13,12.3 L21.5,21.8" stroke="#2a2a2a" stroke-width="3.2" stroke-linecap="round"/>
<ellipse cx="8" cy="7.7" rx="6.7" ry="5.6" fill="#94bce4" stroke="#333" stroke-width="1.6"/>
<path d="M3.5,7 Q4.5,3.8 8.5,3.8" fill="none" stroke="#f0f8ff" stroke-width="1.1"/>
<path d="M4,10 Q8,8.5 12,10" fill="none" stroke="#7aa0c8" stroke-width=".8"/>
</symbol>
<symbol id="zoomext" viewBox="0 0 24 24">
<ellipse cx="11" cy="15" rx="6" ry="2.5" fill="#9a9a9a" opacity=".45"/>
<path d="M15,13.5 L22,22.5" stroke="#2a2a2a" stroke-width="3" stroke-linecap="round"/>
<ellipse cx="11" cy="9.5" rx="6" ry="5.3" fill="#94bce4" stroke="#333" stroke-width="1.5"/>
<path d="M8.5,7.5 L13.5,11.5 M13.5,7.5 L8.5,11.5" stroke="#6a90b8" stroke-width=".6"/>
<g fill="#3d8ef0" stroke="#402040" stroke-width=".35"><path d="M2.5,1.3 L7.8,3.2 L4,6.8 Z"/><path d="M19.5,1.3 L17.8,6.8 L14.3,3.2 Z"/><path d="M0.6,18.4 L2.8,13 L6.6,16.6 Z"/><path d="M19,11.9 L20.5,17 L15.3,16.3 Z"/></g>
</symbol>
<symbol id="photo" viewBox="0 0 24 24">
<path d="M0.7,18.4 L5,10 L7,4.4 L23.4,4.8 L20,12 L14.8,22.3 Z" fill="#fff" stroke="#222" stroke-width=".9" stroke-linejoin="round"/>
<path d="M4,15 L8,7 L13,7 L11,18 Z" fill="#f7d87a" opacity=".8"/>
<path d="M5,12 L14,14" stroke="#e88a10" stroke-width="1.5"/>
<rect x="13.2" y="6" width="7.8" height="3.8" fill="#1f4f95"/>
<path d="M13.6,9.8 L19,9.8 L19,16.9 L21.5,16.9 L16.3,22.6 L11.3,16.9 L13.6,16.9 Z" fill="#f6ee00" stroke="#333" stroke-width=".6"/>
</symbol>
<symbol id="extwh" viewBox="0 0 24 24">
<path d="M2,13 L9,20 L16,16 L8,10 Z" fill="#666"/>
<path d="M0.2,6.5 L5,2 L9,7 L4,11 Z" fill="#b9a37c" stroke="#333" stroke-width=".6"/>
<path d="M9.5,0.8 L20,3 L18,10 L8,8 Z" fill="#b9a37c" stroke="#333" stroke-width=".6"/>
<path d="M4,11 L9,7 L18,10 L14,16 L8,17 Z" fill="#8e7a5a" stroke="#333" stroke-width=".6"/>
<path d="M20,3 L22,5" stroke="#222" stroke-width="1"/>
<path d="M15.2,9.6 L19.8,9.6 L19.8,17.7 L22.2,17.7 L17.5,23.2 L12.8,17.7 L15.2,17.7 Z" fill="#f6ee00" stroke="#333" stroke-width=".6"/>
</symbol>
<symbol id="fm2" viewBox="0 0 24 24">
<ellipse cx="12.5" cy="20.5" rx="8" ry="3.2" fill="#6f5c40"/>
<rect x="4.5" y="16.5" width="16" height="4" fill="#8a7350"/>
<ellipse cx="12.5" cy="16.5" rx="8" ry="3.2" fill="#c8b088" stroke="#333" stroke-width=".5"/>
<path d="M2,2 Q12,2 18,9 Q21,13 20,18" fill="none" stroke="#e80000" stroke-width="2"/>
<path d="M2,8 L10,7 L8,10 L14,15 L12,17 L6,12 L4,15 Z" fill="#e80000" stroke="#700" stroke-width=".4"/>
</symbol>
<symbol id="dim" viewBox="0 0 24 24">
<path d="M3.2,14.9 L14.8,4.2" stroke="#111" stroke-width="1"/>
<path d="M13.4,2.7 L22.6,13 M1.7,13.4 L11.9,24.1" stroke="#111" stroke-width="1.4" stroke-linecap="round"/>
<path d="M12.8,5.5 L17,2.2 M13.2,1.5 L15.6,7 M1.2,16.8 L5.4,13.2 M2,12 L4.4,17.5" stroke="#111" stroke-width="1"/>
<path d="M8.8,2.4 L4.6,2.2 L3.2,5 Q6.5,4.4 7.4,6.8 Q7.8,9 5.2,9.4 Q3.6,9.2 2.6,8.2" fill="none" stroke="#111" stroke-width="1.3"/>
</symbol>
<symbol id="protr" viewBox="0 0 24 24">
<path d="M22.5,3 L23.5,8.5 L8.5,24 L6,23.8 Z" fill="#9a9a9a" opacity=".6"/>
<path d="M5.6,23.6 Q-1,16 1.2,10 Q4,3 13,1.8 L22.2,1.6 Z M8.6,17.2 L17,5 Q11,5.5 8.5,9 Q7,12 8.6,17.2 Z" fill="#f2c000" fill-rule="evenodd" stroke="#3a3000" stroke-width=".8" stroke-linejoin="round"/>
<path d="M3,19 L4.6,18.2 M1.6,14.5 L3.4,14.2 M2,10 L3.8,10.6 M4.2,6.3 L5.6,7.4 M7.5,3.6 L8.4,5.2 M11.5,2.3 L11.8,4" stroke="#5a4800" stroke-width=".6"/>
</symbol>
<symbol id="axes" viewBox="0 0 24 24">
<path d="M3.7,10.4 L19,20" stroke="#e80000" stroke-width="2.2"/>
<path d="M22.5,22.5 L15.5,21.5 L19,16.5 Z" fill="#e80000" stroke="#600" stroke-width=".4"/>
<path d="M0.8,19.2 L16,11.8" stroke="#12c012" stroke-width="2.2" stroke-dasharray="2 1"/>
<path d="M20.5,9.8 L16.8,15 L14.5,9.8 Z" fill="#12c012" stroke="#050" stroke-width=".4"/>
<path d="M11,6 L11,23" stroke="#1a2ee8" stroke-width="2.6"/>
<path d="M11,0.6 L14.5,7 L7.5,7 Z" fill="#1a2ee8" stroke="#001060" stroke-width=".4"/>
</symbol>
<symbol id="txt3d" viewBox="0 0 24 24">
<path d="M19,9 L23,8 L22,20 L18,22 Z" fill="#a0a0a0" opacity=".6"/>
<text x="12" y="22.5" font-family="Liberation Serif" font-style="italic" font-weight="bold" font-size="26" text-anchor="middle" fill="#5a4a35">A</text>
<text x="11.5" y="22" font-family="Liberation Serif" font-style="italic" font-weight="bold" font-size="26" text-anchor="middle" fill="#c4ad88" stroke="#2a2015" stroke-width=".7">A</text>
</symbol>
<symbol id="zoomwin" viewBox="0 0 24 24">
<ellipse cx="8" cy="13" rx="6" ry="2.5" fill="#9a9a9a" opacity=".45"/>
<path d="M12.5,12 L21.3,22" stroke="#2a2a2a" stroke-width="3" stroke-linecap="round"/>
<ellipse cx="8.3" cy="8" rx="6.4" ry="5.5" fill="#94bce4" stroke="#333" stroke-width="1.6"/>
<path d="M4,7.5 Q5,4.5 9,4.2" fill="none" stroke="#f0f8ff" stroke-width="1"/>
<path d="M5.75,5.4 L18.7,4.1 L23.3,18.4 L7.05,21 Z" fill="none" stroke="#0a20e0" stroke-width="1.3" stroke-dasharray="3 2.2"/>
</symbol>
<symbol id="prev" viewBox="0 0 24 24">
<ellipse cx="8" cy="13" rx="6" ry="2.5" fill="#9a9a9a" opacity=".45"/>
<path d="M12,12 L21.3,22" stroke="#2a2a2a" stroke-width="3" stroke-linecap="round"/>
<ellipse cx="7.8" cy="7.75" rx="6.4" ry="5.5" fill="#94bce4" stroke="#222" stroke-width="1.6"/>
<path d="M10.3,5.2 L7.7,18.8 L16.1,13 L14,12 Q17,9 20,10 Q22,11 21.5,14 Q24,12 23.9,10.4 Q23,5.5 17.4,5.8 Q14,6.5 12.3,9 Z" fill="#3d8ef0" stroke="#0a1a8a" stroke-width=".6" stroke-linejoin="round"/>
</symbol>
<symbol id="poscam" viewBox="0 0 24 24">
<path d="M5.5,18.5 L19.5,24 M5.5,24 L19.5,18.5" stroke="#e80000" stroke-width="1.3"/>
<path d="M12.3,1.2 Q14.2,1.5 13.8,4.2 Q16.5,5 16.6,9 L16.8,15.5 L15.2,15.8 L15,21.5 L12.8,21.5 L12.4,16.5 L12,21.5 L9.6,21.5 L9.5,15.8 L8.2,15.5 L8.4,9 Q8.6,5 10.9,4.2 Q10.5,1.5 12.3,1.2 Z" fill="#111"/>
<path d="M10,7.5 L10.3,14.5 M13.8,7 Q15,9 14.2,13" stroke="#fff" stroke-width=".9" fill="none"/>
</symbol>
<symbol id="eye" viewBox="0 0 24 24">
<path d="M0.5,12 Q12,2 23.5,12 Q12,20 0.5,12 Z" fill="#fff" stroke="#222" stroke-width="1.3"/>
<circle cx="11" cy="11.5" r="4.5" fill="#444"/>
<circle cx="11" cy="11.5" r="2" fill="#000"/>
<path d="M2,7 Q12,-1 22,7" fill="none" stroke="#333" stroke-width="1.5"/>
<path d="M4,17 Q12,22 21,16" fill="none" stroke="#bbb" stroke-width="1.5"/>
</symbol>
<symbol id="walk" viewBox="0 0 24 24">
<path d="M6.9,6 Q10.5,7 11.3,11.7 Q11.5,15.5 10.2,17.2 L4.7,17.6 Q2.8,15.5 3,12.5 Q3.8,6.5 6.9,6 Z" fill="#000"/>
<path d="M6.2,19.8 L11.7,19.3 Q12.2,23.5 9.5,25 Q6.5,24 6.2,19.8 Z" fill="#000"/>
<path d="M18.6,1 Q22.8,2.5 23,7.2 Q22.5,11 20.4,12.8 L14.8,12.2 Q13.5,9 14.1,6 Q15,1.2 18.6,1 Z" fill="#000"/>
<path d="M15.2,15 L19.8,15.4 Q19.5,18.8 16.9,19.6 Q15,18.5 15.2,15 Z" fill="#000"/>
</symbol>
<symbol id="section" viewBox="0 0 24 24">
<path d="M13.5,0.5 L23.5,11 L13.5,22 Z" fill="#000"/>
<circle cx="10.5" cy="11.2" r="8.6" fill="#fff" stroke="#000" stroke-width="1.2"/>
<path d="M0.5,11 L20,11" stroke="#000" stroke-width="1.1"/>
<text x="10.4" y="9.3" font-family="Liberation Sans" font-weight="bold" font-size="6.5" text-anchor="middle">C</text>
<text x="10.4" y="17.3" font-family="Liberation Sans" font-weight="bold" font-size="6" text-anchor="middle">A-5</text>
</symbol>
<symbol id="sulogo" viewBox="1.5 2.5 16.5 17">
<path d="M2.2,3.9 L12.7,3 L17.3,6.6 L16.3,15.6 L6.3,19 L4.2,12.5 Z" fill="#e42525"/>
<path d="M3.9,5.4 L11.3,4.5 L15,6.9 L12.4,7.6 L10.6,6.1 L4.3,6.9 Z" fill="#fff"/>
<path d="M5,9.6 L10.6,8.3 L12.1,10.6 L9.2,11.2 L8.6,10.2 L5.4,11 Z" fill="#fff"/>
<path d="M6,13.2 L9,12.6 L9.1,14.3 L6.4,14.9 Z" fill="#fff"/>
</symbol>
</defs>
</svg>

<svg class="abs" style="left:0;top:0" width="1920" height="1080"><use href="#comp" x="49" y="50" width="24" height="24"/><use href="#paint" x="83" y="50" width="24" height="24"/><use href="#eraser" x="117" y="50" width="24" height="24"/><use href="#rect" x="163" y="50" width="24" height="24"/><use href="#pencil" x="196.5" y="50" width="24" height="24"/><use href="#circle" x="230.7" y="50" width="24" height="24"/><use href="#freehand" x="265" y="50" width="24" height="24"/><use href="#poly" x="299" y="50" width="24" height="24"/><use href="#arc" x="333" y="50" width="24" height="24"/><use href="#folder" x="367" y="50" width="24" height="24"/><use href="#folder" x="401" y="50" width="24" height="24"/><use href="#sel" x="15" y="49.5" width="24" height="24"/><use href="#eraser" x="57.400000000000006" y="87.5" width="24" height="24"/><use href="#pencil" x="93.6" y="87.5" width="24" height="24"/><use href="#folder" x="134" y="87.5" width="24" height="24"/><use href="#circle" x="173.6" y="87.5" width="24" height="24"/><use href="#pushpull" x="218" y="87.5" width="24" height="24"/><use href="#followme" x="253" y="87.5" width="24" height="24"/><use href="#move" x="287" y="87.5" width="24" height="24"/><use href="#rotate" x="320.7" y="87.5" width="24" height="24"/><use href="#scale" x="354.8" y="87.5" width="24" height="24"/><use href="#tape" x="397" y="87.5" width="24" height="24"/><use href="#text" x="431" y="87.5" width="24" height="24"/><use href="#paint" x="465" y="87.5" width="24" height="24"/><use href="#orbit" x="507" y="87.5" width="24" height="24"/><use href="#pan" x="541" y="87.5" width="24" height="24"/><use href="#zoom" x="575" y="87.5" width="24" height="24"/><use href="#zoomext" x="608.5" y="87.5" width="24" height="24"/><use href="#photo" x="651" y="87.5" width="24" height="24"/><use href="#extwh" x="685" y="87.5" width="24" height="24"/><use href="#folder" x="719" y="87.5" width="24" height="24"/><use href="#folder" x="753" y="87.5" width="24" height="24"/><use href="#sel" x="15" y="87" width="24" height="24"/><use href="#sel" x="7" y="191" width="24" height="24"/><use href="#comp" x="41" y="191" width="24" height="24"/><use href="#paint" x="7" y="225" width="24" height="24"/><use href="#eraser" x="41" y="225" width="24" height="24"/><use href="#rect" x="7" y="268" width="24" height="24"/><use href="#pencil" x="41" y="268" width="24" height="24"/><use href="#circle" x="7" y="302" width="24" height="24"/><use href="#freehand" x="41" y="302" width="24" height="24"/><use href="#poly" x="7" y="336" width="24" height="24"/><use href="#arc" x="41" y="336" width="24" height="24"/><use href="#folder" x="7" y="370" width="24" height="24"/><use href="#folder" x="41" y="370" width="24" height="24"/><use href="#move" x="7" y="411" width="24" height="24"/><use href="#pushpull" x="41" y="411" width="24" height="24"/><use href="#rotate" x="7" y="445" width="24" height="24"/><use href="#fm2" x="41" y="445" width="24" height="24"/><use href="#scale" x="7" y="479" width="24" height="24"/><use href="#followme" x="41" y="479" width="24" height="24"/><use href="#tape" x="7" y="521" width="24" height="24"/><use href="#dim" x="41" y="521" width="24" height="24"/><use href="#protr" x="7" y="555" width="24" height="24"/><use href="#text" x="41" y="555" width="24" height="24"/><use href="#axes" x="7" y="590" width="24" height="24"/><use href="#txt3d" x="41" y="590" width="24" height="24"/><use href="#orbit" x="7" y="631" width="24" height="24"/><use href="#pan" x="41" y="631" width="24" height="24"/><use href="#zoom" x="7" y="665" width="24" height="24"/><use href="#zoomwin" x="41" y="665" width="24" height="24"/><use href="#zoomext" x="7" y="699" width="24" height="24"/><use href="#prev" x="41" y="699" width="24" height="24"/><use href="#poscam" x="7" y="741" width="24" height="24"/><use href="#eye" x="41" y="741" width="24" height="24"/><use href="#walk" x="7" y="775" width="24" height="24"/><use href="#section" x="41" y="775" width="24" height="24"/></svg>

<div class="abs" style="left:0;top:975px;width:267px;height:38px;border-right:1px solid #a0a0a0;border-bottom:1px solid #a0a0a0;border-left:1px solid #fff"></div>
<div class="abs" style="left:4px;top:978px;width:2px;height:2px;background:linear-gradient(135deg,#f0f0f0 0 30%,#a4a4a4 30% 100%);border-right:1px solid #fafafa;border-bottom:1px solid #fafafa;box-sizing:content-box"></div><div class="abs" style="left:4px;top:982px;width:2px;height:2px;background:linear-gradient(135deg,#f0f0f0 0 30%,#a4a4a4 30% 100%);border-right:1px solid #fafafa;border-bottom:1px solid #fafafa;box-sizing:content-box"></div><div class="abs" style="left:4px;top:986px;width:2px;height:2px;background:linear-gradient(135deg,#f0f0f0 0 30%,#a4a4a4 30% 100%);border-right:1px solid #fafafa;border-bottom:1px solid #fafafa;box-sizing:content-box"></div><div class="abs" style="left:4px;top:990px;width:2px;height:2px;background:linear-gradient(135deg,#f0f0f0 0 30%,#a4a4a4 30% 100%);border-right:1px solid #fafafa;border-bottom:1px solid #fafafa;box-sizing:content-box"></div><div class="abs" style="left:4px;top:994px;width:2px;height:2px;background:linear-gradient(135deg,#f0f0f0 0 30%,#a4a4a4 30% 100%);border-right:1px solid #fafafa;border-bottom:1px solid #fafafa;box-sizing:content-box"></div><div class="abs" style="left:4px;top:998px;width:2px;height:2px;background:linear-gradient(135deg,#f0f0f0 0 30%,#a4a4a4 30% 100%);border-right:1px solid #fafafa;border-bottom:1px solid #fafafa;box-sizing:content-box"></div><div class="abs" style="left:4px;top:1002px;width:2px;height:2px;background:linear-gradient(135deg,#f0f0f0 0 30%,#a4a4a4 30% 100%);border-right:1px solid #fafafa;border-bottom:1px solid #fafafa;box-sizing:content-box"></div><div class="abs" style="left:4px;top:1006px;width:2px;height:2px;background:linear-gradient(135deg,#f0f0f0 0 30%,#a4a4a4 30% 100%);border-right:1px solid #fafafa;border-bottom:1px solid #fafafa;box-sizing:content-box"></div>
<div class="abs" style="left:15px;top:986px;font-size:12px;line-height:16px">Измерения</div>
<div class="abs" style="left:107px;top:986px;width:155px;height:15px;background:#efefef"></div>
<div class="abs" style="left:133px;top:1020px;font-size:13px;line-height:16px;white-space:nowrap">Выберите объекты. Воспользуйтесь клавишей Shift, чтобы увеличить выбранную область. Перетащите мышь, чтобы выбрать несколько объектов.</div>
<svg class="abs" style="left:0;top:1013px" width="125" height="27">
<circle cx="13" cy="13.5" r="9" fill="#f6ecd2" stroke="#7a5214" stroke-width="2"/>
<path d="M13,7 Q16,7 16,10 Q16,12 13.5,14 L13.5,19 L12.5,19 L12.5,14 Q10,12 10,10 Q10,7 13,7Z" fill="#f2aaa0"/>
<circle cx="43" cy="13.5" r="9" fill="#f6ecd2" stroke="#7a5214" stroke-width="2"/>
<path d="M43,6.5 a1.6,1.6 0 1 1 0,3.2 a1.6,1.6 0 1 1 0,-3.2 M40.5,10.5 L45.5,10.5 L45.5,15 L44.5,15 L44.3,20 L41.7,20 L41.5,15 L40.5,15 Z" fill="#000"/>
<circle cx="73" cy="13.5" r="9" fill="#f6ecd2" stroke="#7a5214" stroke-width="2"/>
<text x="73" y="19" font-family="Liberation Serif" font-size="15" text-anchor="middle" fill="#4a4a40">G</text>
<rect x="92" y="9" width="1" height="10" fill="#888"/>
<defs><radialGradient id="qg" cx=".35" cy=".35" r=".7"><stop offset="0" stop-color="#fff"/><stop offset="1" stop-color="#b8d8f8"/></radialGradient></defs><circle cx="107" cy="13.5" r="9.3" fill="url(#qg)" stroke="#24607e" stroke-width="2"/>
<text x="107" y="19" font-family="Liberation Sans" font-weight="bold" font-size="15" text-anchor="middle" fill="#000">?</text>
</svg>


<div class="abs" style="left:0;top:1040px;width:1920px;height:40px;background:linear-gradient(90deg,#1f3036 0%,#1e2e38 35%,#1b2843 75%,#1a2646 100%)"></div>
<div class="abs" style="left:294px;top:1040px;width:48px;height:40px;background:#46565c"></div>
<svg class="abs" style="left:0;top:1040px" width="400" height="40">
<path d="M16,12.5 L22.5,11.6 L22.5,19.3 L16,19.3 Z M23.5,11.5 L32,10.3 L32,19.3 L23.5,19.3 Z M16,20.3 L22.5,20.3 L22.5,28 L16,27.2 Z M23.5,20.3 L32,20.3 L32,29.3 L23.5,28.2 Z" fill="#fff"/>
<circle cx="73.5" cy="17.5" r="7" fill="none" stroke="#fff" stroke-width="2"/>
<path d="M68.5,22.5 L61.5,29.5" stroke="#fff" stroke-width="2.2" stroke-linecap="round"/>
<path d="M112,12 L124,12 M112,28 L124,28 M112.5,14.5 L123.5,14.5 L123.5,25.5 L112.5,25.5 Z M127.5,12 L127.5,15 M127.5,17 L127.5,28" stroke="#fff" stroke-width="1.2" fill="none"/>
<path d="M160,12 L167,12 L169,14 L181,14 L181,28 L160,28 Z" fill="#f2c544"/>
<path d="M160,16 L181,16 L181,28 L160,28 Z" fill="#f8d66a"/>
<path d="M165,23 L176,23 L176,28 L173,28 L173,25.5 L168,25.5 L168,28 L165,28 Z" fill="#2a7fd8"/>
<rect x="208" y="11" width="23" height="22" rx="1.5" fill="#2848c8"/>
<rect x="213" y="11" width="12" height="7" fill="#d8d8d8"/><rect x="220" y="12" width="3" height="5" fill="#2848c8"/>
<rect x="211" y="21" width="17" height="10" fill="#f4f4f4"/>
<path d="M212,23 L227,23 M212,25.5 L227,25.5" stroke="#e88" stroke-width="1"/>
<text x="224" y="30.5" font-size="5" font-family="Liberation Sans" fill="#333">31</text>
<defs><radialGradient id="ffg" cx=".5" cy=".6" r=".6"><stop offset="0" stop-color="#ffbd2e"/><stop offset=".6" stop-color="#ff6a1f"/><stop offset="1" stop-color="#e8206a"/></radialGradient>
<linearGradient id="drg" x1="0" y1="0" x2="0" y2="1"><stop offset="0" stop-color="#ffb020"/><stop offset=".3" stop-color="#f05090"/><stop offset=".6" stop-color="#8a5ae0"/><stop offset="1" stop-color="#20a8f0"/></linearGradient></defs>
<path d="M259,18 Q261,12 265,11 Q263,14 266,15 Q270,12 274,14 Q273,10 271.5,8 Q279,11 280,19 Q281,27 274,30.5 Q267,33 261.5,29 Q257,25 258,20 Z" fill="url(#ffg)"/>
<circle cx="268.7" cy="20.3" r="4.8" fill="#6a3bd0"/>
<path d="M262,17 Q265,13.5 270,15.5 Q266,16.5 265,19 Z" fill="#ff9a20"/>
<use href="#sulogo" x="306" y="7.5" width="22" height="23"/>
<path d="M367.5,8 Q376.5,17 376.5,23.5 Q376.5,31.8 367,31.8 Q357.5,31.8 357.5,23.5 Q357.5,17 367.5,8 Z" fill="url(#drg)"/>
</svg>
<div class="abs" style="left:199px;top:1078px;width:40px;height:2px;background:#76b9ed"></div>
<div class="abs" style="left:249px;top:1078px;width:40px;height:2px;background:#76b9ed"></div>
<div class="abs" style="left:294px;top:1078px;width:48px;height:2px;background:#76b9ed"></div>
<div class="abs" style="left:347px;top:1078px;width:40px;height:2px;background:#76b9ed"></div>
<svg class="abs" style="left:1690px;top:1040px" width="230" height="40">
<path d="M9,23 L14.5,17.5 L20,23" fill="none" stroke="#fff" stroke-width="1.2"/>
<rect x="32" y="15" width="15" height="10" fill="none" stroke="#fff" stroke-width="1.1"/>
<rect x="30" y="14" width="5" height="5" fill="#1b2843" stroke="#fff" stroke-width="1"/>
<path d="M39.5,25 L39.5,28.5 M35,28.5 L44,28.5" stroke="#fff" stroke-width="1.1"/>
<path d="M55,17.5 L58,17.5 L62,14 L62,26 L58,22.5 L55,22.5 Z" fill="none" stroke="#fff" stroke-width="1.1"/>
<path d="M65,17 Q67,20 65,23 M68,15 Q71,20 68,25 M71,13 Q75,20 71,27" fill="none" stroke="#fff" stroke-width="1.1"/>
<text x="82.5" y="24.5" font-family="Liberation Sans" font-size="11.5" fill="#fff" textLength="20.5" lengthAdjust="spacingAndGlyphs">РУС</text>
<text x="143.4" y="15" font-family="Liberation Sans" font-size="11.5" fill="#fff" text-anchor="middle" textLength="26.5" lengthAdjust="spacingAndGlyphs">23:44</text>
<text x="143.8" y="33" font-family="Liberation Sans" font-size="11.5" fill="#fff" text-anchor="middle" textLength="53.5" lengthAdjust="spacingAndGlyphs">06.11.2023</text>
<path d="M189.5,14.5 L205,14.5 L205,25 L196,25 L192,29 L192,25 L189.5,25 Z" fill="#fff"/>
<path d="M192,17.5 L202,17.5 M192,20 L202,20 M192,22.5 L199,22.5" stroke="#1b2843" stroke-width="1"/>
<circle cx="203" cy="27" r="6.5" fill="#333" stroke="#999" stroke-width="1"/>
<text x="203" y="31" font-family="Liberation Sans" font-weight="bold" font-size="10" fill="#fff" text-anchor="middle">1</text>
<rect x="224" y="0" width="1" height="40" fill="#8a93a8"/>
</svg>

</body></html>
